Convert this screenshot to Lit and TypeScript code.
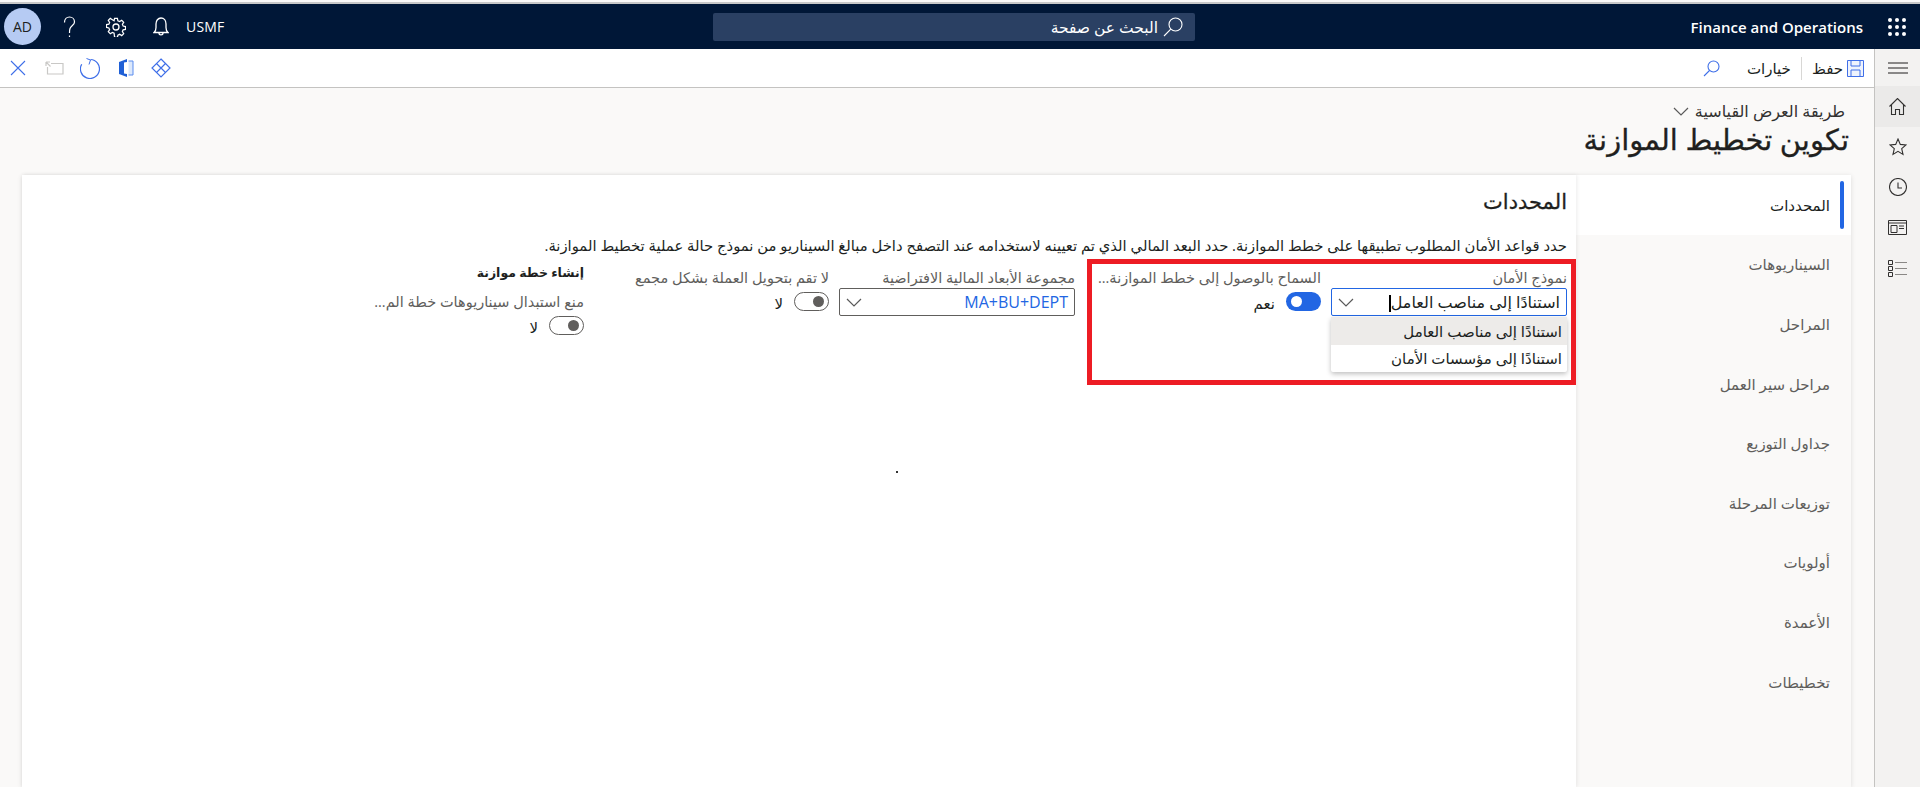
import { LitElement, html, css, svg } from 'lit';
import { customElement } from 'lit/decorators.js';

const chevron = html`<svg width="16" height="9" viewBox="0 0 16 9" fill="none" stroke="#5a5a5a" stroke-width="1.2"><path d="M1 1l7 7 7-7" /></svg>`;

const tabs = ['المحددات', 'السيناريوهات', 'المراحل', 'مراحل سير العمل', 'جداول التوزيع', 'توزيعات المرحلة', 'أولويات', 'الأعمدة', 'تخطيطات'];

const waffle = [4, 11, 18].flatMap((y) => [4, 11, 18].map((x) => svg`<circle cx=${x} cy=${y} r="2" fill="#fff" />`));

@customElement('app-root')
export class AppRoot extends LitElement {
  static styles = css`
    :host {
      display: block;
      font-family: 'Open Sans', 'DejaVu Sans', sans-serif;
      color: #201f1e;
    }
    .page {
      height: 787px;
      overflow: hidden;
      display: flex;
      flex-direction: column;
      background: #faf9f8;
      padding-top: 2px;
      box-sizing: border-box;
    }
    svg {
      display: block;
      flex: none;
    }

    /* top bar */
    .nav {
      height: 47px;
      box-sizing: border-box;
      flex: none;
      border-top: 2px solid #c8c8c8;
      background: #001737;
      display: grid;
      grid-template-columns: 713px 482px 1fr;
      align-items: center;
      color: #fff;
      font-size: 13px;
    }
    .nav-left {
      display: flex;
      align-items: center;
      padding-left: 4px;
    }
    .avatar {
      width: 37px;
      height: 37px;
      border-radius: 50%;
      background: #b6cbf3;
      color: #201f1e;
      display: flex;
      align-items: center;
      justify-content: center;
      font-size: 14px;
      margin-right: 22px;
    }
    .help {
      margin-right: 30px;
    }
    .gear {
      margin-right: 27px;
    }
    .bell {
      margin-right: 17px;
    }
    .company {
      font-size: 14px;
      letter-spacing: 0.2px;
    }
    .search {
      height: 28px;
      background: #2a4063;
      border-radius: 2px;
      display: flex;
      flex-direction: row-reverse;
      align-items: center;
      gap: 5px;
      padding-right: 12px;
      font-size: 15.5px;
    }
    .nav-right {
      display: flex;
      justify-content: flex-end;
      align-items: center;
      gap: 23px;
      padding-right: 12px;
      font-weight: 600;
      font-size: 15px;
    }

    .body {
      flex: 1;
      display: flex;
      min-height: 0;
    }
    .main {
      flex: 1;
      min-width: 0;
      display: flex;
      flex-direction: column;
    }

    /* toolbar */
    .toolbar {
      height: 39px;
      box-sizing: border-box;
      flex: none;
      background: #fff;
      border-bottom: 1px solid #c4c3c1;
      display: flex;
      align-items: center;
      justify-content: space-between;
    }
    .tools-left {
      display: flex;
      align-items: center;
      padding-left: 10px;
    }
    .tools-right {
      display: flex;
      align-items: center;
      padding-right: 10px;
      font-size: 15px;
    }
    .save {
      display: flex;
      align-items: center;
      gap: 4px;
    }
    .divider {
      width: 1px;
      height: 23px;
      background: #d8d7d5;
      margin: 0 10px;
    }
    .tool-search {
      margin: 0 27px 0 0;
    }

    /* page title */
    .head {
      height: 87px;
      flex: none;
      box-sizing: border-box;
      direction: rtl;
      padding: 13px 25px 0 0;
    }
    .view {
      display: flex;
      align-items: center;
      gap: 6px;
      font-size: 16px;
      line-height: 20px;
      color: #323130;
      padding-right: 4px;
    }
    .title {
      font-size: 29px;
      line-height: 36px;
      -webkit-text-stroke: 0.3px #201f1e;
    }

    /* card */
    .card {
      flex: 1;
      margin: 0 23px 0 22px;
      display: flex;
      direction: rtl;
      min-height: 0;
      box-shadow: 0 1px 5px rgba(0, 0, 0, 0.12);
    }
    .tabs {
      width: 275px;
      flex: none;
      background: #faf9f8;
    }
    .tab {
      height: 59.6px;
      box-sizing: border-box;
      padding-right: 21px;
      display: flex;
      align-items: center;
      font-size: 15px;
      color: #605e5c;
      position: relative;
    }
    .tab.on {
      background: #fff;
      color: #201f1e;
    }
    .tab.on::before {
      content: '';
      position: absolute;
      right: 7px;
      top: 6px;
      bottom: 6px;
      width: 4px;
      border-radius: 2px;
      background: #2266e3;
    }
    .panel {
      flex: 1;
      min-width: 0;
      background: #fff;
      padding: 10px 9px 0 0;
      position: relative;
      box-shadow: 1px 0 4px rgba(0, 0, 0, 0.08);
    }
    .panel h2 {
      margin: 0;
      font-size: 21px;
      line-height: 32px;
      font-weight: 400;
      -webkit-text-stroke: 0.3px #201f1e;
    }
    .desc {
      margin-top: 18px;
      font-size: 14.8px;
      line-height: 20px;
      white-space: nowrap;
    }
    .fields {
      display: flex;
      margin-top: 13px;
    }
    .field {
      flex: none;
    }
    .f1 { width: 236px; margin-left: 10px; }
    .f2 { width: 216px; margin-left: 30px; }
    .f3 { width: 236px; margin-left: 10px; }
    .f4 { width: 216px; margin-left: 29px; }
    .f5 { width: 216px; }
    .label {
      font-size: 14.5px;
      line-height: 20px;
      color: #605e5c;
      white-space: nowrap;
    }
    .section {
      font-size: 12.5px;
      line-height: 20px;
      font-weight: 700;
      margin-top: -5px;
      margin-bottom: 9px;
    }
    .input {
      height: 28px;
      box-sizing: border-box;
      border: 1px solid #605e5c;
      border-radius: 2px;
      display: flex;
      align-items: center;
      justify-content: space-between;
      padding: 0 6px;
      font-size: 16px;
      color: #201f1e;
    }
    .input.focus {
      border-color: #2266e3;
    }
    .input.link {
      color: #2266e3;
    }
    .caret {
      display: inline-block;
      width: 2px;
      height: 17px;
      background: #000;
      vertical-align: middle;
    }
    .select {
      position: relative;
    }
    .menu {
      position: absolute;
      top: 29px;
      left: 0;
      right: 0;
      background: #fff;
      border-radius: 2px;
      box-shadow: 0 2px 5px rgba(0, 0, 0, 0.25);
      font-size: 15px;
      z-index: 2;
    }
    .menu div {
      height: 27.5px;
      display: flex;
      align-items: center;
      padding-right: 5px;
    }
    .menu .hover {
      background: #edebe9;
    }
    .toggle-row {
      display: flex;
      align-items: center;
      gap: 11px;
      height: 26px;
      font-size: 15px;
    }
    .toggle-row span {
      padding-top: 4px;
    }
    .toggle {
      width: 35px;
      height: 19px;
      box-sizing: border-box;
      border-radius: 10px;
      position: relative;
      flex: none;
    }
    .toggle.yes {
      background: #2266e3;
    }
    .toggle.no {
      border: 1px solid #605e5c;
      background: #fff;
    }
    .toggle::after {
      content: '';
      position: absolute;
      top: 50%;
      width: 11px;
      height: 11px;
      margin-top: -5.5px;
      border-radius: 50%;
    }
    .toggle.yes::after {
      right: 19px;
      background: #fff;
    }
    .toggle.no::after {
      right: 4px;
      background: #605e5c;
    }
    .highlight {
      position: absolute;
      left: 1065px;
      top: 84px;
      width: 489px;
      height: 126px;
      box-sizing: border-box;
      border: 5px solid #ed1c24;
      z-index: 3;
      pointer-events: none;
    }
    .dot {
      position: absolute;
      left: 874px;
      top: 296px;
      width: 2px;
      height: 2px;
      background: #333;
    }

    /* right rail */
    .rail {
      width: 45px;
      flex: none;
      background: #f3f2f1;
      border-left: 1px solid #c4c3c1;
      display: flex;
      flex-direction: column;
      align-items: center;
    }
    .rail-btn {
      width: 100%;
      height: 40.5px;
      display: flex;
      align-items: center;
      justify-content: center;
    }
    .rail-btn.on {
      background: #ebeae9;
    }
  `;

  render() {
    return html`
      <div class="page">
        <div class="nav">
          <div class="nav-left">
            <div class="avatar">AD</div>
            <svg class="help" width="13" height="22" viewBox="0 0 13 22" fill="none" stroke="#fff" stroke-width="1.2"><path d="M1.500 6.500C1.500 3 3.800 1 6.500 1s5 2 5 5c0 3-3.500 3.500-4.500 6.500-.4 1.200-.5 3-.5 4.500" /><path d="M6.500 19.500v1.500" /></svg>
            <svg class="gear" width="20" height="20" viewBox="0 0 20 20" fill="none" stroke="#fff" stroke-width="1.300"><circle cx="10" cy="10" r="3" /><path d="M8.500 1h3l.5 2.500 1.800.8 2.200-1.400 2.100 2.100-1.400 2.200.8 1.800 2.500.5v3l-2.500.5-.8 1.800 1.400 2.200-2.100 2.100-2.200-1.400-1.800.8-.5 2.500h-3L8 16.500l-1.800-.8L4 17.100 1.900 15l1.400-2.200-.8-1.800L0 10.500v-3l2.500-.5.8-1.800L1.900 3 4 .9l2.200 1.400L8 3.500z" transform="translate(.5 .5) scale(.95)" /></svg>
            <svg class="bell" width="16" height="20" viewBox="0 0 16 20" fill="none" stroke="#fff" stroke-width="1.300"><path d="M1 15.500c1.500-1 2-2.500 2-5V7c0-3.300 2-6 5-6s5 2.700 5 6v3.500c0 2.500.5 4 2 5z" /><path d="M6 16c0 2.500 4 2.500 4 0" /></svg>
            <span class="company">USMF</span>
          </div>
          <div class="search" dir="ltr">
            <svg width="20" height="20" viewBox="0 0 20 20" fill="none" stroke="#fff" stroke-width="1.100"><circle cx="12.500" cy="7.500" r="6.500" /><path d="M7.800 12.200L1 19" /></svg>
            <span dir="rtl">البحث عن صفحة</span>
          </div>
          <div class="nav-right">
            <span>Finance and Operations</span>
            <svg width="22" height="22" viewBox="0 0 22 22">${waffle}</svg>
          </div>
        </div>

        <div class="body">
          <div class="main">
            <div class="toolbar">
              <div class="tools-left">
                <svg width="16" height="16" viewBox="0 0 16 16" stroke="#3f6fe8" stroke-width="1.100" fill="none"><path d="M1 1l14 14M15 1L1 15" /></svg>
                <svg style="margin-left:19px" width="19" height="14" viewBox="0 0 19 14" stroke="#c9c8c6" stroke-width="1.200" fill="none"><path d="M6 2.500h12v10.500H2.500V6" /><path d="M1 1l4.500 4.500M1 1h4M1 1v4" /></svg>
                <svg style="margin-left:16px" width="20" height="21" viewBox="0 0 20 21" stroke="#3f6fe8" stroke-width="1.200" fill="none"><path d="M1.700 6.300A9.500 9.500 0 1 0 10.500 1.500" /><path d="M6.500.5L10.500 2 9 6.500" stroke-width="1" /></svg>
                <svg style="margin-left:18px" width="16" height="20" viewBox="0 0 16 20"><path d="M1 4l8-3v18l-8-3z" fill="#1f5fd6" /><path d="M6 4.500v11l3 .5V4z" fill="#fff" /><path d="M10.500 3h4.500v14h-4.500" fill="#dce8fb" stroke="#5b8def" stroke-width="1" /></svg>
                <svg style="margin-left:17px" width="20" height="20" viewBox="0 0 20 20" stroke="#3f6fe8" stroke-width="1.200" fill="none"><path d="M10 1l9 9-9 9-9-9z" /><path d="M5.500 5.500l9 9M14.500 5.500l-9 9" /></svg>
              </div>
              <div class="tools-right">
                <svg class="tool-search" width="17" height="17" viewBox="0 0 17 17" fill="none" stroke="#3f6fe8" stroke-width="1.100"><circle cx="10.500" cy="6.500" r="5.500" /><path d="M6.500 10.500L1 16" /></svg>
                <span dir="rtl">خيارات</span>
                <div class="divider"></div>
                <div class="save">
                  <span dir="rtl">حفظ</span>
                  <svg width="17" height="17" viewBox="0 0 17 17" fill="#eef3fd" stroke="#3f6fe8" stroke-width="1"><path d="M.5.500h16v16H.5z" /><path d="M4 .500v5.500h9V.500M4 16.500V10h9v6.500" fill="none" /></svg>
                </div>
              </div>
            </div>

            <div class="head">
              <div class="view">
                <span>طريقة العرض القياسية</span>
                ${chevron}
              </div>
              <div class="title">تكوين تخطيط الموازنة</div>
            </div>

            <div class="card">
              <div class="tabs">
                ${tabs.map((t, i) => html`<div class="tab ${i === 0 ? 'on' : ''}">${t}</div>`)}
              </div>
              <div class="panel">
                <h2>المحددات</h2>
                <div class="desc">حدد قواعد الأمان المطلوب تطبيقها على خطط الموازنة. حدد البعد المالي الذي تم تعيينه لاستخدامه عند التصفح داخل مبالغ السيناريو من نموذج حالة عملية تخطيط الموازنة.</div>
                <div class="fields">
                  <div class="field f1">
                    <div class="label">نموذج الأمان</div>
                    <div class="select">
                      <div class="input focus">
                        <span>استنادًا إلى مناصب العامل<span class="caret"></span></span>
                        ${chevron}
                      </div>
                      <div class="menu">
                        <div class="hover">استنادًا إلى مناصب العامل</div>
                        <div>استنادًا إلى مؤسسات الأمان</div>
                      </div>
                    </div>
                  </div>
                  <div class="field f2">
                    <div class="label">السماح بالوصول إلى خطط الموازنة...</div>
                    <div class="toggle-row"><div class="toggle yes"></div><span>نعم</span></div>
                  </div>
                  <div class="field f3">
                    <div class="label">مجموعة الأبعاد المالية الافتراضية</div>
                    <div class="input link"><span dir="ltr">MA+BU+DEPT</span>${chevron}</div>
                  </div>
                  <div class="field f4">
                    <div class="label">لا تقم بتحويل العملة بشكل مجمع</div>
                    <div class="toggle-row"><div class="toggle no"></div><span>لا</span></div>
                  </div>
                  <div class="field f5">
                    <div class="section">إنشاء خطة موازنة</div>
                    <div class="label">منع استبدال سيناريوهات خطة الم...</div>
                    <div class="toggle-row"><div class="toggle no"></div><span>لا</span></div>
                  </div>
                </div>
                <div class="highlight"></div>
                <div class="dot"></div>
              </div>
            </div>
          </div>

          <div class="rail">
            <div class="rail-btn" style="height:37px">
              <svg width="20" height="12" viewBox="0 0 20 12" stroke="#201f1e" stroke-width="1"><path d="M0 1h20M0 6h20M0 11h20" /></svg>
            </div>
            <div class="rail-btn on">
              <svg width="17" height="17" viewBox="0 0 17 17" fill="none" stroke="#323130" stroke-width="1.100"><path d="M.5 8.500l8-8 8 8M2.500 7v9.500h4v-5h4v5h4V7" /></svg>
            </div>
            <div class="rail-btn">
              <svg width="18" height="18" viewBox="0 0 18 18" fill="none" stroke="#323130" stroke-width="1.100"><path d="M9 1l2.300 5.400 5.700.5-4.300 3.800 1.300 5.700L9 13.400l-5 3 1.300-5.700L1 6.900l5.700-.5z" /></svg>
            </div>
            <div class="rail-btn">
              <svg width="18" height="18" viewBox="0 0 18 18" fill="none" stroke="#323130" stroke-width="1.100"><circle cx="9" cy="9" r="8.500" /><path d="M9 4.500V10h4" /></svg>
            </div>
            <div class="rail-btn">
              <svg width="19" height="15" viewBox="0 0 19 15" fill="none" stroke="#323130" stroke-width="1"><path d="M.5.500h18v14H.5zM.5 3h18" /><path d="M3 5.500h6v7H3zM11 6h5M11 8.500h5" /></svg>
            </div>
            <div class="rail-btn">
              <svg width="19" height="17" viewBox="0 0 19 17" fill="none" stroke="#323130" stroke-width="1"><path d="M.5.500h4v4h-4zM.5 6.500h4v4h-4zM.5 12.500h4v4h-4z" /><path d="M7 2.500h12M7 8.500h12M7 14.500h12" stroke="#8a8886" stroke-width="1.200" /></svg>
            </div>
          </div>
        </div>
      </div>
    `;
  }
}
